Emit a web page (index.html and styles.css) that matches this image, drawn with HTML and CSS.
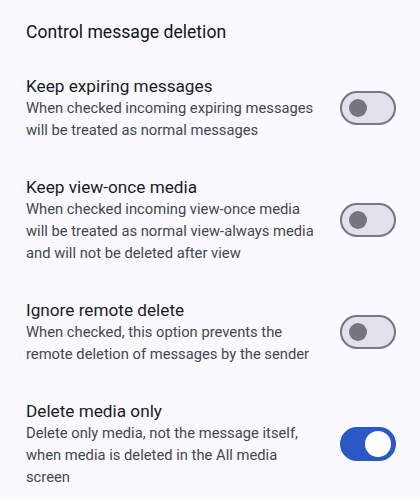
FILE: index.html
```html
<!DOCTYPE html>
<html lang="en">
<head>
<meta charset="utf-8">
<title>Control message deletion</title>
<link rel="stylesheet" href="styles.css">
</head>
<body>
<main class="screen">
  <h2 class="category">Control message deletion</h2>
  <div class="pref">
    <div class="pref-text">
      <div class="pref-title">Keep expiring messages</div>
      <div class="pref-summary">When checked incoming expiring messages will be treated as normal messages</div>
    </div>
    <span class="switch"><span class="thumb"></span></span>
  </div>
  <div class="pref">
    <div class="pref-text">
      <div class="pref-title">Keep view-once media</div>
      <div class="pref-summary">When checked incoming view-once media will be treated as normal view-always media and will not be deleted after view</div>
    </div>
    <span class="switch"><span class="thumb"></span></span>
  </div>
  <div class="pref">
    <div class="pref-text">
      <div class="pref-title">Ignore remote delete</div>
      <div class="pref-summary">When checked, this option prevents the remote deletion of messages by the sender</div>
    </div>
    <span class="switch"><span class="thumb"></span></span>
  </div>
  <div class="pref">
    <div class="pref-text">
      <div class="pref-title">Delete media only</div>
      <div class="pref-summary">Delete only media, not the message itself, when media is deleted in the All media screen</div>
    </div>
    <span class="switch on"><span class="thumb"></span></span>
  </div>
</main>
</body>
</html>
```

FILE: styles.css
```css
html, body {
  margin: 0;
  padding: 0;
  background: #f9f9ff;
}

body {
  font-family: Roboto, "Noto Sans", sans-serif;
  color: #1a1c1e;
}

.screen {
  padding: 20px 24px 0 26px;
}

.category {
  margin: 0 0 14px;
  font-size: 17.6px;
  font-weight: 400;
  line-height: 24px;
  color: #111316;
}

.pref {
  display: flex;
  align-items: center;
  gap: 16px;
  padding: 17px 0 18px;
}

.pref-text {
  flex: 1;
  min-width: 0;
}

.pref-title {
  font-size: 17.2px;
  line-height: 22px;
  color: #1a1c1e;
}

.pref-summary {
  font-size: 14.75px;
  line-height: 22px;
  color: #44474e;
}

.switch {
  flex: none;
  box-sizing: border-box;
  width: 56px;
  height: 34px;
  border-radius: 17px;
  border: 2px solid #74777f;
  background: #e1e2ec;
  display: flex;
  align-items: center;
  padding-left: 7px;
}

.thumb {
  width: 18px;
  height: 18px;
  border-radius: 50%;
  background: #74777f;
}

.switch.on {
  border-color: #2c58c6;
  background: #2c58c6;
  justify-content: flex-end;
  padding: 0 3px 0 0;
}

.switch.on .thumb {
  width: 26px;
  height: 26px;
  background: #ffffff;
}
```
